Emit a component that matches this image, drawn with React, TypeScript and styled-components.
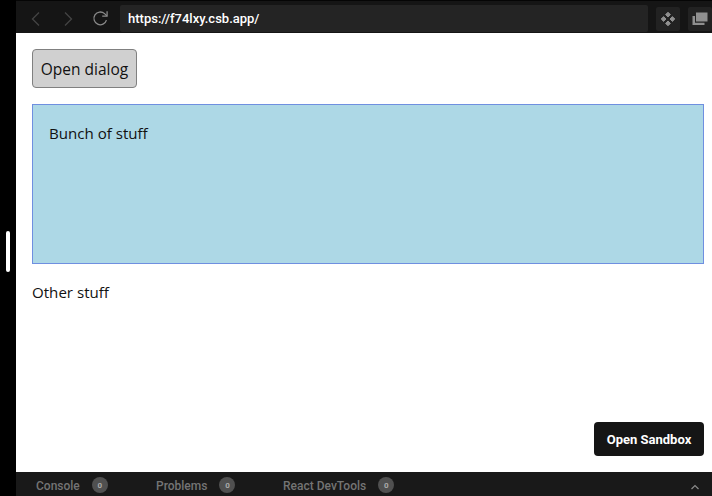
import React from "react";
import styled, { createGlobalStyle } from "styled-components";

const Global = createGlobalStyle`
  html, body { margin: 0; padding: 0; background: #000; }
  #root { width: 712px; height: 496px; overflow: hidden; }
`;

const Shell = styled.div`
  display: flex;
  width: 712px;
  height: 496px;
  background: #000;
`;

const Rail = styled.div`
  width: 16px;
  flex: none;
  padding-top: 231px;
  box-sizing: border-box;
  display: flex;
  justify-content: center;
  background: #000;
`;

const Handle = styled.div`
  width: 4px;
  height: 41px;
  border-radius: 2px;
  background: #fff;
`;

const Main = styled.div`
  flex: 1;
  min-width: 0;
  display: flex;
  flex-direction: column;
  background: #fff;
`;

const Toolbar = styled.div`
  height: 33px;
  flex: none;
  box-sizing: border-box;
  display: flex;
  align-items: center;
  background: #151515;
  border-top: 1px solid #050505;
  padding: 4px 0 1px 8px;
`;

const NavButton = styled.div`
  width: 24px;
  height: 24px;
  flex: none;
  margin-right: 8px;
  display: flex;
  align-items: center;
  justify-content: center;
`;

const Address = styled.div`
  flex: 1;
  height: 27px;
  padding-left: 8px;
  box-sizing: border-box;
  display: flex;
  align-items: center;
  background: #242424;
  border-radius: 2px;
  color: #fff;
  font: 500 13px Roboto, sans-serif;
`;

const ToolButton = styled.div`
  width: 24px;
  height: 24px;
  flex: none;
  margin-left: 8px;
  display: flex;
  align-items: center;
  justify-content: center;
  background: #222;
  border-radius: 2px;
`;

const Content = styled.div`
  flex: 1;
  position: relative;
  padding: 16px 8px 0 16px;
  font-family: "Open Sans", "Noto Sans", sans-serif;
  color: #000;
`;

const DialogButton = styled.button`
  display: block;
  width: 105px;
  height: 39px;
  padding: 0;
  box-sizing: border-box;
  background: #d0d0d0;
  border: 1px solid #808080;
  border-radius: 4px;
  font: 400 15.5px "Open Sans", "Noto Sans", sans-serif;
  color: #111;
`;

const Panel = styled.div`
  height: 160px;
  margin-top: 16px;
  padding: 17px 16px;
  box-sizing: border-box;
  background: lightblue;
  border: 1px solid #6f8fe0;
  font-size: 15.1px;
  line-height: 22px;
  color: #111;
`;

const Plain = styled.p`
  margin: 17px 0 0;
  font-size: 15.1px;
  line-height: 22px;
  color: #111;
`;

const SandboxLink = styled.div`
  position: absolute;
  right: 8px;
  bottom: 16px;
  width: 110px;
  height: 34px;
  display: flex;
  align-items: center;
  justify-content: center;
  background: #151515;
  border-radius: 4px;
  color: #fff;
  font: 700 13px Roboto, sans-serif;
`;

const Footer = styled.div`
  height: 24px;
  flex: none;
  box-sizing: border-box;
  display: flex;
  align-items: center;
  padding: 3px 12px 0 20px;
  background: #191919;
  color: #747474;
  font: 500 12px Roboto, sans-serif;
`;

const Tab = styled.div<{ $width: number }>`
  width: ${(p) => p.$width}px;
  flex: none;
  display: flex;
  align-items: center;
  gap: 12px;
`;

const Count = styled.span`
  width: 16px;
  height: 16px;
  margin-top: -1px;
  border-radius: 50%;
  display: flex;
  align-items: center;
  justify-content: center;
  background: #505050;
  color: #aaa;
  font: 700 8px Roboto, sans-serif;
`;

const Chevron = styled.svg`
  margin-left: auto;
  margin-top: 2px;
`;

const Back = () => (
  <svg width="12" height="16" viewBox="0 0 12 16" fill="none" stroke="#444" strokeWidth="1.3">
    <path d="M9 1.5 2.5 8 9 14.5" />
  </svg>
);
const Forward = () => (
  <svg width="12" height="16" viewBox="0 0 12 16" fill="none" stroke="#444" strokeWidth="1.3">
    <path d="M3 1.5 9.5 8 3 14.5" />
  </svg>
);
const Reload = () => (
  <svg width="17" height="17" viewBox="0 0 16 16" fill="none" stroke="#8a8a8a" strokeWidth="1.2">
    <path d="M13.6 9.5A6 6 0 1 1 11.8 3.4L14 5.5" />
    <path d="M14.2 1.2v4.6H9.6" />
  </svg>
);
const Diamonds = () => (
  <svg width="16" height="16" viewBox="0 0 16 16" fill="#8f8f8f" stroke="#8f8f8f" strokeWidth="1" strokeLinejoin="round">
    <path d="M8 1.2 10.4 3.6 8 6 5.6 3.6Z" />
    <path d="M8 10 10.4 12.4 8 14.8 5.6 12.4Z" />
    <path d="M3.6 5.6 6 8 3.6 10.4 1.2 8Z" />
    <path d="M12.4 5.6 14.8 8 12.4 10.4 10 8Z" />
  </svg>
);
const Windows = () => (
  <svg width="16" height="14" viewBox="0 0 16 14" fill="#8f8f8f">
    <path d="M4 0.5h11.5v9H4Z" />
    <path d="M0.5 4H3v6.8h9.5V13H0.5Z" />
  </svg>
);

export default function App() {
  return (
    <>
      <Global />
      <Shell>
        <Rail>
          <Handle />
        </Rail>
        <Main>
          <Toolbar>
            <NavButton><Back /></NavButton>
            <NavButton><Forward /></NavButton>
            <NavButton><Reload /></NavButton>
            <Address>https://f74lxy.csb.app/</Address>
            <ToolButton><Diamonds /></ToolButton>
            <ToolButton><Windows /></ToolButton>
          </Toolbar>
          <Content>
            <DialogButton>Open dialog</DialogButton>
            <Panel>Bunch of stuff</Panel>
            <Plain>Other stuff</Plain>
            <SandboxLink>Open Sandbox</SandboxLink>
          </Content>
          <Footer>
            <Tab $width={120}>Console <Count>0</Count></Tab>
            <Tab $width={127}>Problems <Count>0</Count></Tab>
            <Tab $width={130}>React DevTools <Count>0</Count></Tab>
            <Chevron width="10" height="6" viewBox="0 0 10 6" fill="none" stroke="#8a8a8a" strokeWidth="1.2">
              <path d="M1.5 5 5 1.5 8.5 5" />
            </Chevron>
          </Footer>
        </Main>
      </Shell>
    </>
  );
}
